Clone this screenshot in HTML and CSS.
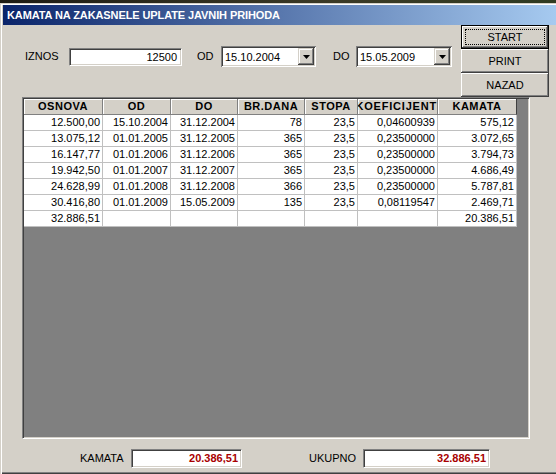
FILE: index.html
```html
<!DOCTYPE html>
<html lang="sr">
<head>
    <meta charset="UTF-8">
    <meta name="viewport" content="width=device-width, initial-scale=1.0">
    <title>Kamata na zakasnele uplate javnih prihoda</title>
    <link rel="stylesheet" href="styles.css">
</head>
<body>
    <div class="window">
        <div class="caption">KAMATA NA ZAKASNELE UPLATE JAVNIH PRIHODA</div>

        <!-- unos: iznos i period -->
        <div class="top">
            <div class="fields">
                <label class="lbl lbl-iznos">IZNOS</label>
                <div class="edit edit-iznos">12500</div>
                <label class="lbl lbl-od">OD</label>
                <div class="combo combo-od">
                    <span class="combo-text">15.10.2004</span>
                    <span class="drop"><svg width="7" height="4" viewBox="0 0 7 4"><path d="M0 0h7L3.5 4z" fill="#000"/></svg></span>
                </div>
                <label class="lbl lbl-do">DO</label>
                <div class="combo combo-do">
                    <span class="combo-text">15.05.2009</span>
                    <span class="drop"><svg width="7" height="4" viewBox="0 0 7 4"><path d="M0 0h7L3.5 4z" fill="#000"/></svg></span>
                </div>
            </div>
            <div class="buttons">
                <button class="btn btn-default">START</button>
                <button class="btn">PRINT</button>
                <button class="btn">NAZAD</button>
            </div>
        </div>

        <!-- obracun po godinama -->
        <div class="panel">
            <table class="grid">
                <thead>
                    <tr>
                        <th class="c-osnova">OSNOVA</th>
                        <th class="c-od">OD</th>
                        <th class="c-do">DO</th>
                        <th class="c-dana">BR.DANA</th>
                        <th class="c-stopa">STOPA</th>
                        <th class="c-koef"><div class="clip">KOEFICIJENT</div></th>
                        <th class="c-kamata">KAMATA</th>
                    </tr>
                </thead>
                <tbody>
                    <tr><td>12.500,00</td><td>15.10.2004</td><td>31.12.2004</td><td>78</td><td>23,5</td><td>0,04600939</td><td>575,12</td></tr>
                    <tr><td>13.075,12</td><td>01.01.2005</td><td>31.12.2005</td><td>365</td><td>23,5</td><td>0,23500000</td><td>3.072,65</td></tr>
                    <tr><td>16.147,77</td><td>01.01.2006</td><td>31.12.2006</td><td>365</td><td>23,5</td><td>0,23500000</td><td>3.794,73</td></tr>
                    <tr><td>19.942,50</td><td>01.01.2007</td><td>31.12.2007</td><td>365</td><td>23,5</td><td>0,23500000</td><td>4.686,49</td></tr>
                    <tr><td>24.628,99</td><td>01.01.2008</td><td>31.12.2008</td><td>366</td><td>23,5</td><td>0,23500000</td><td>5.787,81</td></tr>
                    <tr><td>30.416,80</td><td>01.01.2009</td><td>15.05.2009</td><td>135</td><td>23,5</td><td>0,08119547</td><td>2.469,71</td></tr>
                    <tr><td>32.886,51</td><td></td><td></td><td></td><td></td><td></td><td>20.386,51</td></tr>
                </tbody>
            </table>
        </div>

        <!-- ukupno -->
        <div class="totals">
            <label class="lbl lbl-kamata">KAMATA</label>
            <div class="edit edit-total edit-kamata">20.386,51</div>
            <label class="lbl lbl-ukupno">UKUPNO</label>
            <div class="edit edit-total edit-ukupno">32.886,51</div>
        </div>
    </div>
</body>
</html>
```

FILE: styles.css
```css
* {
    box-sizing: border-box;
}

html,
body {
    margin: 0;
}

body {
    width: 556px;
    height: 474px;
    overflow: hidden;
    background: linear-gradient(to right, #1e1c14, #3b3a26 60%, #2f3b22);
    font-family: 'Liberation Sans', Arial, sans-serif;
    font-size: 11px;
    color: #000;
}

/* --- Prozor --- */
.window {
    margin-top: 3px;
    height: 471px;
    padding-top: 2px;
    background-color: #d4d0c8;
    box-shadow: inset 1px 1px #d4d0c8, inset 2px 2px #fff, inset 0 -1px #404040, inset 0 -2px #808080;
}

.caption {
    height: 20px;
    margin-left: 3px;
    padding-left: 4px;
    background: linear-gradient(to right, #0a246a, #a6caf0);
    color: #fff;
    font-weight: bold;
    letter-spacing: -0.1px;
    line-height: 20px;
    white-space: nowrap;
}

/* --- Gornji deo --- */
.top {
    display: flex;
    height: 72px;
}

.fields {
    display: flex;
    align-items: center;
    height: 42px;
    padding: 21px 0 0 25px;
}

.lbl {
    line-height: 19px;
    white-space: nowrap;
}

.lbl-iznos { width: 44px; }
.lbl-od { width: 24px; margin-left: 15px; }
.lbl-do { width: 23px; margin-left: 17px; }

.edit {
    height: 18px;
    padding: 0 4px;
    background-color: #fff;
    border: 1px solid;
    border-color: #808080 #fff #fff #808080;
    box-shadow: inset 1px 1px #404040, inset -1px -1px #d4d0c8;
    text-align: right;
    line-height: 16px;
}

.edit-iznos {
    width: 113px;
}

.combo {
    display: flex;
    align-items: center;
    height: 21px;
    padding: 2px;
    background-color: #fff;
    box-shadow: inset 1px 1px #808080, inset -1px -1px #fff, inset 2px 2px #404040, inset -2px -2px #d4d0c8;
}

.combo-od { width: 95px; }
.combo-do { width: 96px; }

.combo-text {
    flex: 1;
    padding-left: 2px;
}

.drop {
    display: flex;
    align-items: center;
    justify-content: center;
    width: 16px;
    height: 17px;
    padding-top: 1px;
    background-color: #d4d0c8;
    box-shadow: inset -1px -1px #404040, inset 1px 1px #d4d0c8, inset -2px -2px #808080, inset 2px 2px #fff;
}

.buttons {
    display: flex;
    flex-direction: column;
    width: 88px;
    margin-left: auto;
    margin-right: 7px;
}

.btn {
    position: relative;
    height: 24px;
    padding: 0;
    border: none;
    background-color: #d4d0c8;
    box-shadow: inset -1px -1px #404040, inset 1px 1px #fff, inset -2px -2px #808080, inset 2px 2px #d4d0c8;
    font-family: inherit;
    font-size: 11px;
    color: #000;
}

.btn-default {
    box-shadow: inset 0 0 0 1px #000, inset -2px -2px #404040, inset 2px 2px #fff, inset -3px -3px #808080;
}

.btn-default::after {
    content: "";
    position: absolute;
    inset: 4px;
    border: 1px dotted #000;
}

/* --- Tabela --- */
.panel {
    width: 508px;
    height: 342px;
    margin-left: 22px;
    background-color: #808080;
    border: 1px solid;
    border-color: #808080 #fff #fff #808080;
    box-shadow: inset 1px 1px #404040, inset -1px -1px #d4d0c8;
    padding: 1px;
}

.grid {
    width: 493px;
    table-layout: fixed;
    border-collapse: separate;
    border-spacing: 0;
}

.grid th {
    height: 16px;
    padding: 0;
    background-color: #d4d0c8;
    border-right: 1px solid #808080;
    border-bottom: 1px solid #808080;
    box-shadow: inset 1px 1px #fff;
    font-weight: bold;
    letter-spacing: 0.5px;
    line-height: 15px;
    text-align: center;
    white-space: nowrap;
    overflow: hidden;
}

.grid th.c-kamata {
    border-right-color: #404040;
}

.c-osnova { width: 79px; }
.c-od { width: 68px; }
.c-do { width: 67px; }
.c-dana { width: 67px; }
.c-stopa { width: 53px; }
.c-koef { width: 80px; }
.c-kamata { width: 79px; }

/* naslov kolone je siri od kolone, sece se s leve strane */
.clip {
    display: flex;
    justify-content: flex-end;
    overflow: hidden;
    letter-spacing: 0.8px;
}

.grid td {
    height: 16px;
    padding: 0 2px 0 0;
    background-color: #fff;
    border-right: 1px solid #c0c0c0;
    border-bottom: 1px solid #c0c0c0;
    line-height: 15px;
    text-align: right;
    white-space: nowrap;
    overflow: hidden;
}

/* --- Ukupno --- */
.totals {
    display: flex;
    align-items: flex-start;
    height: 35px;
    padding: 10px 0 0 80px;
}

.lbl-kamata { width: 51px; }
.lbl-ukupno { width: 54px; margin-left: 67px; }

.edit-total {
    height: 19px;
    padding-right: 3px;
    color: #a80000;
    font-weight: bold;
    line-height: 17px;
}

.edit-kamata { width: 111px; }
.edit-ukupno { width: 127px; }
```
